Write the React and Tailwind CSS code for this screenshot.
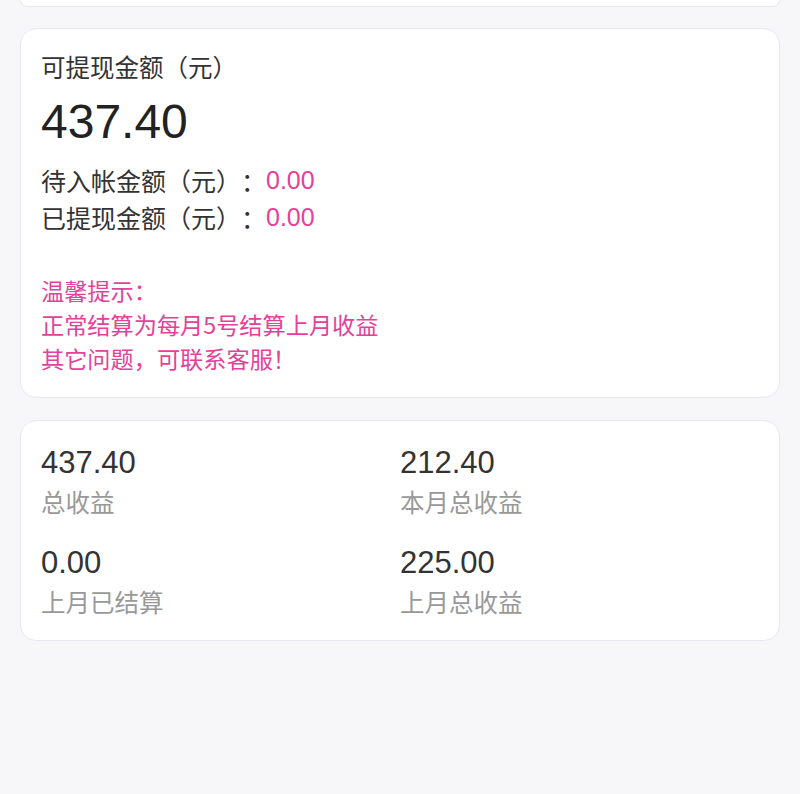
import React from "react";

const font = { fontFamily: '"Liberation Sans", "Noto Sans CJK SC", sans-serif' };
const cjk = { fontFamily: '"Noto Sans CJK SC", "Liberation Sans", sans-serif' };

export default function App() {
  return (
    <div
      className="min-h-[794px] w-full bg-[#f7f7f9] px-5 text-[#333333] [text-spacing-trim:space-all]"
      style={font}
    >
      <div className="h-[7px] rounded-b-2xl border border-t-0 border-[#e9e7f3] bg-white" />

      <div className="mt-[21px] rounded-2xl border border-[#e9e7f3] bg-white px-5 pb-5 pt-5">
        <div className="h-[36px] text-[24.5px] leading-[36px]" style={cjk}>可提现金额（元）</div>
        <div className="mt-[9px] h-[56px] text-[48px] leading-[56px] text-[#222]">437.40</div>
        <div className="mt-[12px] flex h-[37px] items-center text-[25px]">
          <span style={cjk}>待入帐金额（元）：</span>
          <span className="text-[#e4419a]">0.00</span>
        </div>
        <div className="flex h-[37px] items-center text-[25px]">
          <span style={cjk}>已提现金额（元）：</span>
          <span className="text-[#e4419a]">0.00</span>
        </div>
        <div className="mt-[37px] text-[23.2px] leading-[34px] text-[#e4419a]" style={cjk}>
          <div className="h-[34px]">温馨提示：</div>
          <div className="h-[34px]">正常结算为每月5号结算上月收益</div>
          <div className="h-[34px]">其它问题，可联系客服！</div>
        </div>
        <div className="h-[2px]" />
      </div>

      <div className="mt-[22px] rounded-2xl border border-[#e9e7f3] bg-white px-5 pb-[17px] pt-[22px]">
        <div className="grid grid-cols-2 gap-y-5">
          {[
            ["437.40", "总收益"],
            ["212.40", "本月总收益"],
            ["0.00", "上月已结算"],
            ["225.00", "上月总收益"],
          ].map(([v, l]) => (
            <div key={l}>
              <div className="h-[40px] text-[31px] leading-[40px] text-[#333]">{v}</div>
              <div className="h-[40px] text-[24.5px] leading-[38px] text-[#999999]" style={cjk}>{l}</div>
            </div>
          ))}
        </div>
      </div>
    </div>
  );
}
